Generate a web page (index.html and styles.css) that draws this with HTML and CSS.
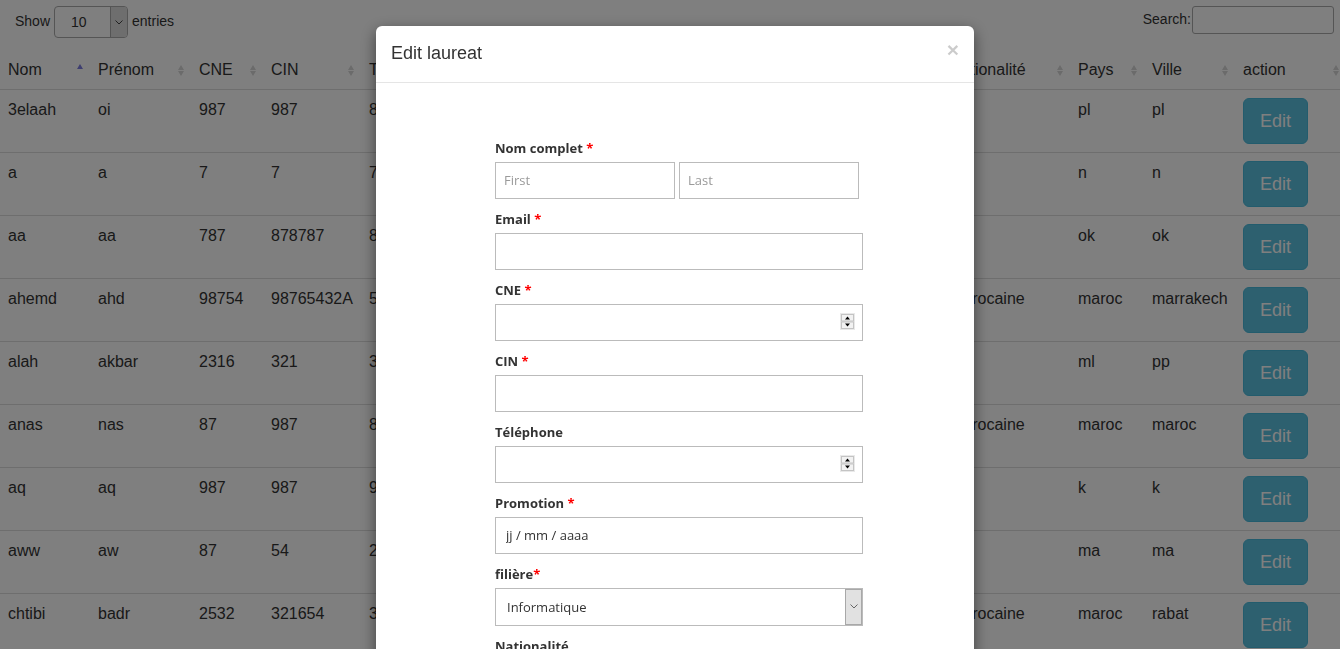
FILE: index.html
```html
<!DOCTYPE html>
<html lang="fr">
<head>
<meta charset="utf-8">
<title>Laureats</title>
<link rel="stylesheet" href="styles.css">
</head>
<body>
<div class="page">
  <div class="dt-top">
    <div class="len">
      <span>Show</span>
      <span class="selwrap">
        <select class="len-select"><option>10</option></select>
        <span class="selbtn"><svg width="8" height="5" viewBox="0 0 8 5"><path d="M0.5 0.5L4 4L7.5 0.5" fill="none" stroke="#444" stroke-width="1"/></svg></span>
      </span>
      <span>entries</span>
    </div>
    <label class="search">Search:<input type="search" class="search-input"></label>
  </div>
  <table class="dt">
    <colgroup>
      <col class="c-nom"><col class="c-prenom"><col class="c-cne"><col class="c-cin"><col class="c-tel"><col class="c-promo"><col class="c-fil"><col class="c-email"><col class="c-nat"><col class="c-pays"><col class="c-ville"><col class="c-act">
    </colgroup>
    <thead>
      <tr>
        <th class="asc">Nom</th><th class="both">Prénom</th><th class="both">CNE</th><th class="both">CIN</th><th class="both">Téléphone</th><th class="both">Promotion</th><th class="both">Filière</th><th class="both">Email</th><th class="both">Nationalité</th><th class="both">Pays</th><th class="both">Ville</th><th class="both">action</th>
      </tr>
    </thead>
    <tbody>
      <tr><td>3elaah</td><td>oi</td><td>987</td><td>987</td><td>876543</td><td>2019-06-01</td><td>Informatique</td><td>a@a.com</td><td>pl</td><td>pl</td><td>pl</td><td><span class="btn-edit">Edit</span></td></tr>
      <tr><td>a</td><td>a</td><td>7</td><td>7</td><td>7</td><td>2018-06-01</td><td>Informatique</td><td>a@a.a</td><td>n</td><td>n</td><td>n</td><td><span class="btn-edit">Edit</span></td></tr>
      <tr><td>aa</td><td>aa</td><td>787</td><td>878787</td><td>878787</td><td>2017-06-01</td><td>Gestion</td><td>aa@aa.com</td><td>ok</td><td>ok</td><td>ok</td><td><span class="btn-edit">Edit</span></td></tr>
      <tr><td>ahemd</td><td>ahd</td><td>98754</td><td>98765432A</td><td>5987654</td><td>2016-06-01</td><td>Informatique</td><td>ahd@gmail.com</td><td>marocaine</td><td>maroc</td><td>marrakech</td><td><span class="btn-edit">Edit</span></td></tr>
      <tr><td>alah</td><td>akbar</td><td>2316</td><td>321</td><td>321</td><td>2015-06-01</td><td>Informatique</td><td>alah@a.com</td><td>ml</td><td>ml</td><td>pp</td><td><span class="btn-edit">Edit</span></td></tr>
      <tr><td>anas</td><td>nas</td><td>87</td><td>987</td><td>8765</td><td>2019-06-01</td><td>Informatique</td><td>anas@a.com</td><td>marocaine</td><td>maroc</td><td>maroc</td><td><span class="btn-edit">Edit</span></td></tr>
      <tr><td>aq</td><td>aq</td><td>987</td><td>987</td><td>987</td><td>2018-06-01</td><td>Gestion</td><td>aq@a.com</td><td>k</td><td>k</td><td>k</td><td><span class="btn-edit">Edit</span></td></tr>
      <tr><td>aww</td><td>aw</td><td>87</td><td>54</td><td>2654</td><td>2017-06-01</td><td>Informatique</td><td>aw@a.com</td><td>ma</td><td>ma</td><td>ma</td><td><span class="btn-edit">Edit</span></td></tr>
      <tr><td>chtibi</td><td>badr</td><td>2532</td><td>321654</td><td>3216540</td><td>2016-06-01</td><td>Informatique</td><td>badr@gmail.com</td><td>marocaine</td><td>maroc</td><td>rabat</td><td><span class="btn-edit">Edit</span></td></tr>
      <tr><td>hamza</td><td>ham</td><td>1234</td><td>1234</td><td>1234</td><td>2016-06-01</td><td>Informatique</td><td>h@a.com</td><td>marocaine</td><td>maroc</td><td>fes</td><td><span class="btn-edit">Edit</span></td></tr>
    </tbody>
  </table>
</div>

<div class="backdrop"></div>

<div class="modal-dialog">
  <div class="modal-content">
    <div class="modal-header">
      <h4 class="modal-title">Edit laureat</h4>
      <span class="close">×</span>
    </div>
    <div class="modal-body">
      <form class="form">
        <div class="field">
          <label>Nom complet <span class="req">*</span></label>
          <div class="name-row">
            <input class="inp half" type="text" placeholder="First">
            <input class="inp half" type="text" placeholder="Last">
          </div>
        </div>
        <div class="field">
          <label>Email <span class="req">*</span></label>
          <input class="inp" type="text">
        </div>
        <div class="field">
          <label>CNE <span class="req">*</span></label>
          <div class="numwrap">
            <input class="inp" type="text">
            <span class="spin"><svg width="15" height="17" viewBox="0 0 15 17"><rect width="15" height="17" fill="#e9e9e9"/><rect x="1.5" y="1.5" width="12" height="6.5" fill="#f2f2f2" stroke="#c4c4c4"/><rect x="1.5" y="9" width="12" height="6.5" fill="#f2f2f2" stroke="#c4c4c4"/><path d="M5 6.5h5L7.5 3.5z" fill="#000"/><path d="M5 10.5h5L7.5 13.5z" fill="#000"/></svg></span>
          </div>
        </div>
        <div class="field">
          <label>CIN <span class="req">*</span></label>
          <input class="inp" type="text">
        </div>
        <div class="field">
          <label>Téléphone</label>
          <div class="numwrap">
            <input class="inp" type="text">
            <span class="spin"><svg width="15" height="17" viewBox="0 0 15 17"><rect width="15" height="17" fill="#e9e9e9"/><rect x="1.5" y="1.5" width="12" height="6.5" fill="#f2f2f2" stroke="#c4c4c4"/><rect x="1.5" y="9" width="12" height="6.5" fill="#f2f2f2" stroke="#c4c4c4"/><path d="M5 6.5h5L7.5 3.5z" fill="#000"/><path d="M5 10.5h5L7.5 13.5z" fill="#000"/></svg></span>
          </div>
        </div>
        <div class="field">
          <label>Promotion <span class="req">*</span></label>
          <input class="inp date" type="text" value="jj / mm / aaaa">
        </div>
        <div class="field">
          <label>filière<span class="req">*</span></label>
          <div class="selwrap block">
            <select class="inp sel"><option>Informatique</option></select>
            <span class="selbtn big"><svg width="8" height="5" viewBox="0 0 8 5"><path d="M0.5 0.5L4 4L7.5 0.5" fill="none" stroke="#666" stroke-width="1"/></svg></span>
          </div>
        </div>
        <div class="field">
          <label>Nationalité</label>
          <input class="inp" type="text">
        </div>
        <div class="field">
          <label>Pays</label>
          <input class="inp" type="text">
        </div>
      </form>
    </div>
  </div>
</div>
</body>
</html>
```

FILE: styles.css
```css
* { box-sizing: border-box; }
html, body { margin: 0; height: 100%; overflow: hidden; }
body {
  font-family: "Liberation Sans", Arial, sans-serif;
  font-size: 14px;
  line-height: 1.42857;
  color: #333;
  background: #fff;
}

/* top controls */
.dt-top {
  display: flex;
  justify-content: space-between;
  align-items: flex-start;
  height: 50px;
  padding: 6px 6px 0 15px;
}
.len { display: flex; align-items: center; gap: 4px; height: 32px; }
.selwrap { position: relative; display: inline-block; }
.selwrap.block { display: block; }
.len-select {
  -webkit-appearance: none;
  appearance: none;
  width: 74px;
  height: 32px;
  border: 1px solid #aaa;
  border-radius: 4px;
  background: #fff;
  padding: 0 0 0 16px;
  font: 14px "Liberation Sans", Arial, sans-serif;
  color: #333;
}
.selbtn {
  position: absolute;
  top: 1px; right: 1px; bottom: 1px;
  width: 17px;
  background: #dcdcdc;
  border-left: 1px solid #a8a8a8;
  border-radius: 0 3px 3px 0;
  display: flex;
  align-items: center;
  justify-content: center;
  pointer-events: none;
}
.selbtn.big { width: 17px; border-radius: 0; border: 1px solid #a8a8a8; background: #e1e1e1; top: 1px; right: 1px; bottom: 1px; }
.search { display: flex; align-items: center; height: 28px; }
.search-input {
  width: 142px;
  height: 28px;
  margin-left: 1px;
  border: 1px solid #aaa;
  border-radius: 3px;
  background: #fff;
}

/* table */
.dt {
  border-collapse: collapse;
  table-layout: fixed;
  width: 1346px;
  font-size: 16px;
  line-height: 1.42857;
}
.c-nom { width: 90px; }
.c-prenom { width: 101px; }
.c-cne { width: 72px; }
.c-cin { width: 98px; }
.c-tel { width: 120px; }
.c-promo { width: 120px; }
.c-fil { width: 140px; }
.c-email { width: 201px; }
.c-nat { width: 128px; }
.c-pays { width: 74px; }
.c-ville { width: 91px; }
.c-act { width: 111px; }

.dt th {
  position: relative;
  text-align: left;
  font-weight: normal;
  padding: 9px 8px 7px;
  border-bottom: 1px solid #ddd;
  white-space: nowrap;
}
.dt th::before,
.dt th::after {
  content: "";
  position: absolute;
  right: 7px;
  width: 0; height: 0;
  border-left: 3.5px solid transparent;
  border-right: 3.5px solid transparent;
}
.dt th.both::before { top: 15px; border-bottom: 5px solid #d6d6d6; }
.dt th.both::after { top: 21px; border-top: 5px solid #d6d6d6; }
.dt th.asc::before { top: 14px; border-bottom: 5px solid #7c7ce0; }
.dt th.asc::after { display: none; }

.dt td {
  padding: 9px 8px 7px;
  border-top: 1px solid #ddd;
  vertical-align: top;
  white-space: nowrap;
}
.dt td:last-child { padding-top: 8px; padding-bottom: 8px; }
.dt tbody tr:first-child td { border-top: 0; }

.btn-edit {
  display: inline-block;
  padding: 10px 16px;
  font-size: 18px;
  line-height: 1.3333333;
  border-radius: 6px;
  background: #5bc0de;
  border: 1px solid #46b8da;
  color: #fff;
}

/* modal */
.backdrop {
  position: fixed;
  top: 0; left: 0; right: 0; bottom: 0;
  background: rgba(0, 0, 0, 0.5);
}
.modal-dialog {
  position: fixed;
  top: 26px;
  left: 376px;
  width: 598px;
}
.modal-content {
  background: #fff;
  border-radius: 6px;
  box-shadow: 0 5px 15px rgba(0, 0, 0, 0.5);
}
.modal-header {
  display: flex;
  justify-content: space-between;
  align-items: flex-start;
  padding: 15px;
  border-bottom: 1px solid #e5e5e5;
}
.modal-title {
  margin: 0;
  font-size: 18px;
  font-weight: normal;
  line-height: 1.42857;
  color: #333;
}
.close {
  font-size: 21px;
  font-weight: bold;
  line-height: 1;
  color: #000;
  opacity: 0.2;
  margin-top: -2px;
}
.modal-body { padding: 15px; }
.form {
  width: 368px;
  margin-left: 104px;
  padding-top: 41px;
}
.field { margin-bottom: 11px; }
.field label {
  display: block;
  font: bold 13px/18px "Open Sans", "DejaVu Sans", sans-serif;
  color: #333;
  margin-bottom: 5px;
}
.req { color: #f00; }
.inp {
  display: block;
  width: 368px;
  height: 37px;
  margin: 0;
  border: 1px solid #bbb;
  border-radius: 0;
  padding: 0 8px;
  background: #fff;
  font: 13px "Open Sans", "DejaVu Sans", sans-serif;
  color: #333;
  outline: none;
}
.inp::placeholder { color: #9a9a9a; }
.name-row { display: flex; gap: 4px; }
.inp.half { width: 180px; }
.inp.date { padding-left: 10px; }
.inp.sel {
  -webkit-appearance: none;
  appearance: none;
  height: 38px;
  padding-left: 11px;
}
.numwrap { position: relative; }
.spin {
  position: absolute;
  top: 9px;
  right: 8px;
  width: 15px;
  height: 17px;
  display: block;
  line-height: 0;
}
```
